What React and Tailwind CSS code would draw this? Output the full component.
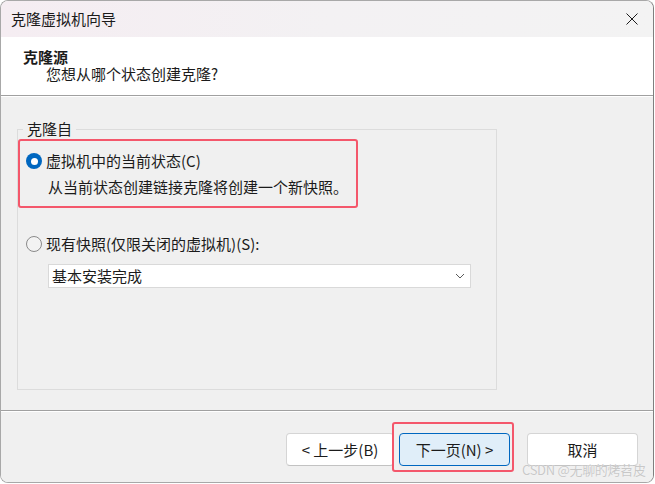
import React from 'react'

const font = { fontFamily: '"Noto Sans CJK SC", "Noto Sans", sans-serif' }

function Radio({ checked }) {
  if (checked) {
    return (
      <span className="w-[16px] h-[16px] rounded-full bg-[#0067c0] flex items-center justify-center shrink-0">
        <span className="w-[7px] h-[7px] rounded-full bg-white" />
      </span>
    )
  }
  return <span className="w-[16px] h-[16px] rounded-full border border-[#8a8a8a] bg-[#f3f3f3] shrink-0" />
}

function Chevron() {
  return (
    <svg width="10" height="6" viewBox="0 0 10 6" fill="none">
      <path d="M1 1 L5 5 L9 1" stroke="#5a5a5a" strokeWidth="1" />
    </svg>
  )
}

export default function App() {
  return (
    <div className="w-[655px] h-[484px] bg-white relative overflow-hidden text-[#1b1b1b]" style={font}>
      <div className="w-[654px] h-[483px] flex flex-col rounded-[8px] border border-[#a8a8a8] border-r-[#7f7f7f] overflow-hidden">
        {/* title bar */}
        <div className="h-[36px] shrink-0 flex items-center justify-between pl-[10px] pr-[15px] bg-linear-to-r from-[#f5edf2] via-[#f3f1f3] to-[#f3f3f3]">
          <span className="text-[15px] leading-[20px]">克隆虚拟机向导</span>
          <svg width="12" height="12" viewBox="0 0 12 12" fill="none">
            <path d="M0.5 0.5 L11.5 11.5 M11.5 0.5 L0.5 11.5" stroke="#1b1b1b" strokeWidth="1" />
          </svg>
        </div>

        {/* header */}
        <div className="h-[58px] shrink-0 bg-white pt-[10px] pl-[22px]">
          <div className="text-[15px] leading-[20px] font-bold">克隆源</div>
          <div className="text-[15px] leading-[20px] pl-[23px] mt-[-3px]">您想从哪个状态创建克隆?</div>
        </div>
        <div className="h-px bg-[#a0a0a0] shrink-0" />
        <div className="h-px bg-white shrink-0" />

        {/* content */}
        <div className="flex-1 bg-[#f0f0f0] flex flex-col pt-[22px] pb-[20px] pl-[16px] pr-[156px]">
          <fieldset className="flex-1 border border-[#dcdcdc] pl-[8px]">
            <legend className="ml-[-3px] px-[4px] text-[15px] leading-[20px]">克隆自</legend>
            <div className="mt-[12px] flex items-center gap-[4px] h-[20px]">
              <Radio checked />
              <span className="text-[15px] leading-[20px]">虚拟机中的当前状态(C)</span>
            </div>
            <div className="mt-[6px] pl-[22px] text-[15px] leading-[20px]">
              从当前状态创建链接克隆将创建一个新快照。
            </div>
            <div className="mt-[37px] flex items-center gap-[4px] h-[20px]">
              <Radio />
              <span className="text-[15px] leading-[20px]">现有快照(仅限关闭的虚拟机)(S):</span>
            </div>
            <div className="mt-[10px] ml-[22px] w-[423px] h-[24px] bg-white border border-[#d9d9d9] flex items-center justify-between pl-[3px] pr-[5px]">
              <span className="text-[15px] leading-[20px]">基本安装完成</span>
              <Chevron />
            </div>
          </fieldset>
        </div>

        <div className="h-px bg-[#a0a0a0] shrink-0" />
        <div className="h-px bg-white shrink-0" />

        {/* footer */}
        <div className="h-[70px] shrink-0 bg-[#f0f0f0] flex items-start justify-end pt-[21px] pr-[15px]">
          <button className="w-[108px] h-[33px] rounded-[4px] bg-white border border-[#d5d5d5] border-b-[#c2c2c2] text-[15px] leading-[20px]">
            &lt; 上一步(B)
          </button>
          <button className="ml-[5px] w-[111px] h-[33px] rounded-[4px] bg-[#e0eef9] border border-[#0067c0] text-[15px] leading-[20px]">
            下一页(N) &gt;
          </button>
          <button className="ml-[17px] w-[111px] h-[33px] rounded-[4px] bg-white border border-[#d5d5d5] border-b-[#c2c2c2] text-[15px] leading-[20px]">
            取消
          </button>
        </div>
      </div>

      {/* annotation boxes */}
      <div className="absolute left-[18px] top-[139px] w-[340px] h-[69px] border-2 border-[#f4576b] rounded-[3px]" />
      <div className="absolute left-[392px] top-[422px] w-[122px] h-[50px] border-2 border-[#f4576b] rounded-[3px]" />

      {/* watermark */}
      <div className="absolute left-[522px] top-[461px] text-[13px] leading-[18px] tracking-[-0.3px] whitespace-nowrap text-[#c8c8c8] [text-shadow:0_0_1px_#ffffff]">
        CSDN @无聊的烤苕皮
      </div>
    </div>
  )
}
